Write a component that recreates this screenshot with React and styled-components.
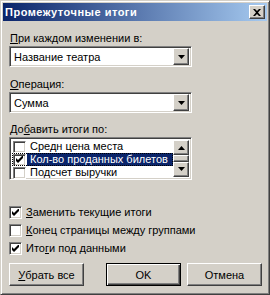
import styled, { createGlobalStyle } from "styled-components";

const Global = createGlobalStyle`
  html, body {
    margin: 0;
    padding: 0;
    background: #d4d0c8;
  }
  * {
    box-sizing: border-box;
  }
`;

const raised = `
  border: 1px solid;
  border-color: #ffffff #404040 #404040 #ffffff;
  box-shadow: inset -1px -1px #808080, inset 1px 1px #d4d0c8;
`;

const sunken = `
  border: 1px solid;
  border-color: #808080 #ffffff #ffffff #808080;
  box-shadow: inset 1px 1px #404040, inset -1px -1px #d4d0c8;
`;

const ListItem = ({ label, checked, selected }) => (
  <ListRow $selected={selected}>
    <Box $small checked={checked} />
    <ItemText $selected={selected}>{label}</ItemText>
  </ListRow>
);

const CheckOption = ({ checked, children }) => (
  <CheckRow>
    <Box checked={checked} />
    <span>{children}</span>
  </CheckRow>
);

const Box = ({ checked, $small }) => (
  <CheckBox $small={$small}>
    {checked && (
      <svg width="7" height="7" viewBox="0 0 7 7">
        <path d="M0 2v3l2 2 5-5V-1L2 4z" fill="#000" />
      </svg>
    )}
  </CheckBox>
);

const Arrow = ({ up }) => (
  <svg width="7" height="4" viewBox="0 0 7 4">
    <path d={up ? "M3.5 0L7 4H0z" : "M0 0h7L3.5 4z"} fill="#000" />
  </svg>
);

const App = () => {
  return (
    <>
      <Global />
      <Window>
        <TitleBar>
          <Title>Промежуточные итоги</Title>
          <CloseBtn>
            <svg width="8" height="7" viewBox="0 0 8 7">
              <path
                d="M0 0h2l2 2 2-2h2L5 3.5 8 7H6L4 5 2 7H0l3-3.5z"
                fill="#000"
              />
            </svg>
          </CloseBtn>
        </TitleBar>
        <Body>
          <Label $top={11}>
            <u>П</u>ри каждом изменении в:
          </Label>
          <Combo>
            <ComboText>Название театра</ComboText>
            <DropBtn>
              <Arrow />
            </DropBtn>
          </Combo>
          <Label $top={11}>
            <u>О</u>перация:
          </Label>
          <Combo>
            <ComboText>Сумма</ComboText>
            <DropBtn>
              <Arrow />
            </DropBtn>
          </Combo>
          <Label $top={10}>
            До<u>б</u>авить итоги по:
          </Label>
          <List>
            <Items>
              <ListItem label="Средн цена места" />
              <ListItem label="Кол-во проданных билетов" checked selected />
              <ListItem label="Подсчет выручки" />
            </Items>
            <ScrollBar>
              <ScrollBtn $h={16}>
                <Arrow up />
              </ScrollBtn>
              <Thumb />
              <ScrollBtn $h={16}>
                <Arrow />
              </ScrollBtn>
            </ScrollBar>
          </List>
          <Options>
            <CheckOption checked>
              <u>З</u>аменить текущие итоги
            </CheckOption>
            <CheckOption>
              <u>К</u>онец страницы между группами
            </CheckOption>
            <CheckOption checked>
              Ито<u>г</u>и под данными
            </CheckOption>
          </Options>
          <Buttons>
            <Button>
              <u>У</u>брать все
            </Button>
            <Button $default $gap={22}>
              OK
            </Button>
            <Button $gap={6}>Отмена</Button>
          </Buttons>
        </Body>
      </Window>
    </>
  );
};

const Window = styled.div`
  width: 270px;
  height: 295px;
  background: #d4d0c8;
  border: 1px solid;
  border-color: #d4d0c8 #404040 #404040 #d4d0c8;
  box-shadow: inset 1px 1px #ffffff, inset -1px -1px #808080;
  padding: 2px;
  display: flex;
  flex-direction: column;
  font-family: "Liberation Sans", Arial, sans-serif;
  font-size: 11px;
  color: #000;
`;

const TitleBar = styled.div`
  height: 18px;
  display: flex;
  align-items: center;
  justify-content: space-between;
  padding: 0 2px 0 2px;
  background: linear-gradient(to right, #0a246a, #a6caf0);
`;

const Title = styled.div`
  color: #fff;
  font-weight: bold;
  font-size: 11px;
  letter-spacing: 0.5px;
`;

const CloseBtn = styled.div`
  width: 16px;
  height: 14px;
  background: #d4d0c8;
  ${raised}
  display: flex;
  align-items: center;
  justify-content: center;
`;

const Body = styled.div`
  display: flex;
  flex-direction: column;
  padding: 0 0 0 6px;
`;

const Label = styled.div`
  height: 13px;
  line-height: 13px;
  margin-top: ${(p) => p.$top}px;
  margin-bottom: 1px;
  padding-left: 1px;
`;

const Combo = styled.div`
  width: 183px;
  height: 21px;
  background: #fff;
  ${sunken}
  display: flex;
  align-items: center;
  padding: 2px;
`;

const ComboText = styled.div`
  flex: 1;
  padding-left: 2px;
`;

const DropBtn = styled.div`
  width: 16px;
  height: 17px;
  background: #d4d0c8;
  ${raised}
  display: flex;
  align-items: center;
  justify-content: center;
`;

const List = styled.div`
  width: 183px;
  height: 43px;
  background: #fff;
  ${sunken}
  padding: 2px;
  display: flex;
`;

const Items = styled.div`
  flex: 1;
  display: flex;
  flex-direction: column;
`;

const ListRow = styled.div`
  height: 13px;
  display: flex;
  align-items: center;
  padding-left: 1px;
  outline: ${(p) => (p.$selected ? "1px dotted #000" : "none")};
  outline-offset: -1px;
`;

const ItemText = styled.div`
  flex: 1;
  height: 13px;
  line-height: 13px;
  padding-left: 3px;
  margin-left: 1px;
  background: ${(p) => (p.$selected ? "#0a246a" : "transparent")};
  color: ${(p) => (p.$selected ? "#fff" : "#000")};
  white-space: nowrap;
`;

const CheckBox = styled.div`
  width: 13px;
  height: ${(p) => (p.$small ? 12 : 13)}px;
  flex: none;
  background: #fff;
  ${sunken}
  display: flex;
  align-items: center;
  justify-content: center;
`;

const ScrollBar = styled.div`
  width: 16px;
  display: flex;
  flex-direction: column;
  background: #ebe9e4;
`;

const ScrollBtn = styled.div`
  height: ${(p) => p.$h}px;
  background: #d4d0c8;
  ${raised}
  display: flex;
  align-items: center;
  justify-content: center;
`;

const Thumb = styled.div`
  height: 7px;
  background: #d4d0c8;
  ${raised}
`;

const Options = styled.div`
  display: flex;
  flex-direction: column;
  margin-top: 23px;
`;

const CheckRow = styled.div`
  height: 18px;
  display: flex;
  align-items: center;
  gap: 4px;
`;

const Buttons = styled.div`
  display: flex;
  margin-top: 6px;
`;

const Button = styled.div`
  width: 75px;
  height: 23px;
  margin-left: ${(p) => p.$gap || 0}px;
  background: #d4d0c8;
  display: flex;
  align-items: center;
  justify-content: center;
  ${(p) =>
    p.$default
      ? `
    border: 1px solid #000;
    box-shadow: inset 1px 1px #fff, inset -1px -1px #404040, inset -2px -2px #808080;
  `
      : raised}
`;

export default App;
